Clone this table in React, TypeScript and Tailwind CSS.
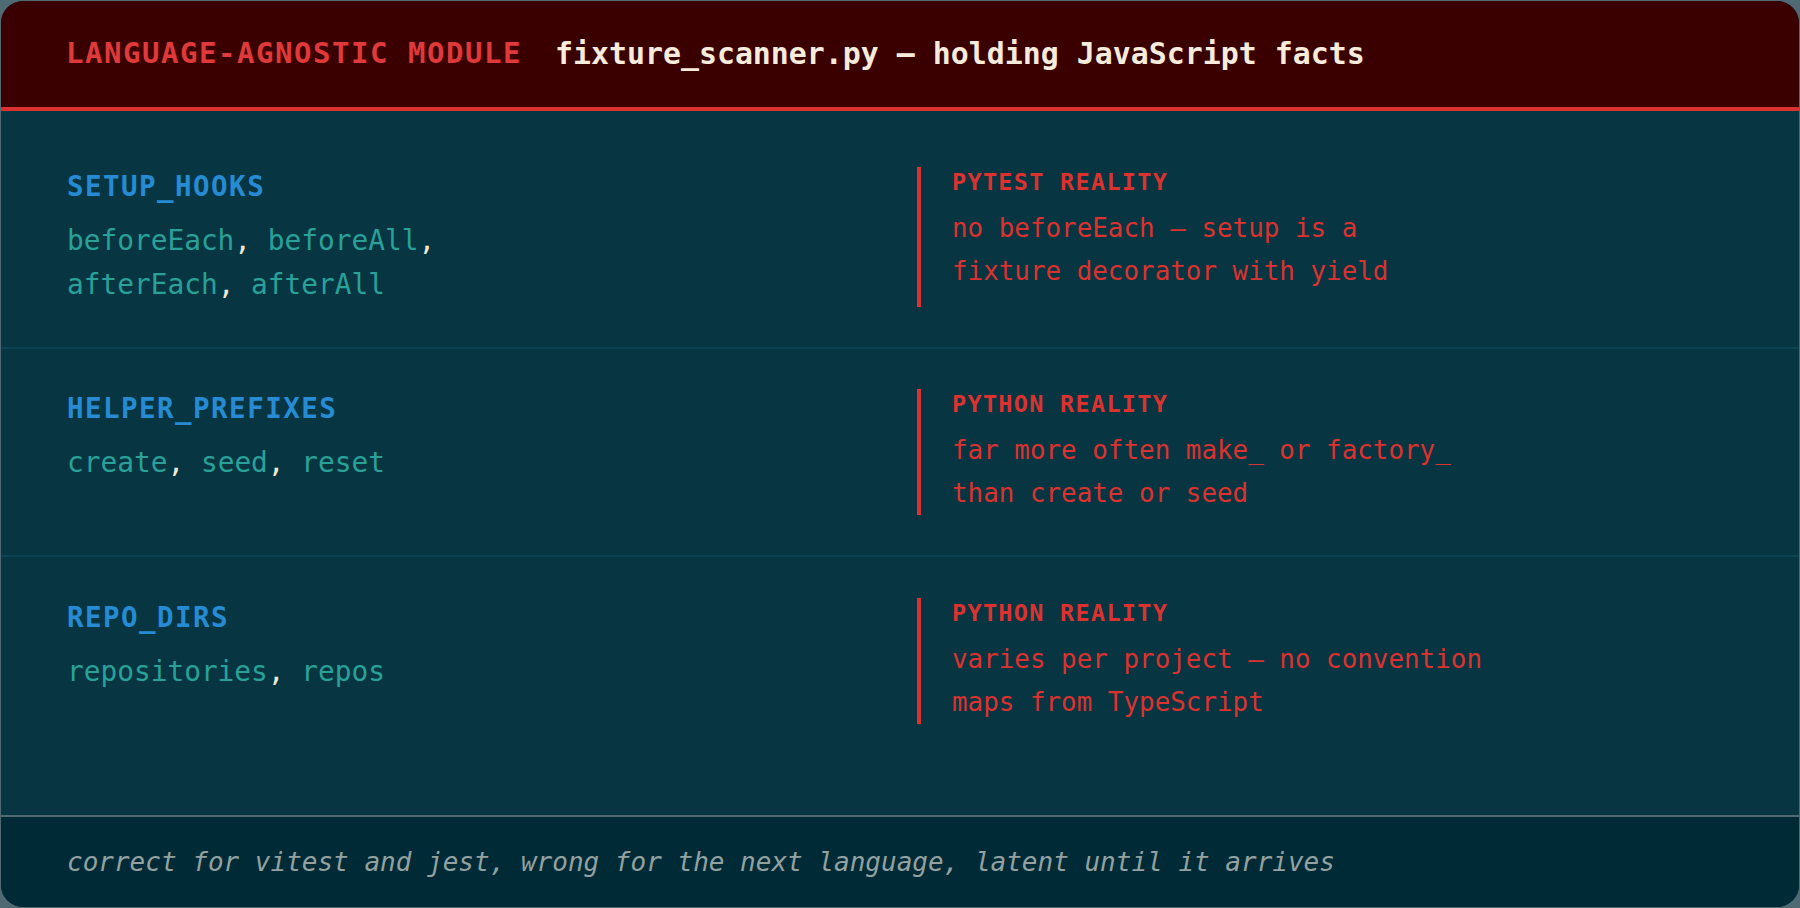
const rows = [
  {
    key: "SETUP_HOOKS",
    values: [["beforeEach", "beforeAll"], ["afterEach", "afterAll"]],
    label: "PYTEST REALITY",
    lines: ["no beforeEach — setup is a", "fixture decorator with yield"],
    first: true,
  },
  {
    key: "HELPER_PREFIXES",
    values: [["create", "seed", "reset"]],
    label: "PYTHON REALITY",
    lines: ["far more often make_ or factory_", "than create or seed"],
  },
  {
    key: "REPO_DIRS",
    values: [["repositories", "repos"]],
    label: "PYTHON REALITY",
    lines: ["varies per project — no convention", "maps from TypeScript"],
    last: true,
  },
];

const mono = "font-['DejaVu_Sans_Mono','Liberation_Mono',monospace]";

export default function App() {
  return (
    <div className={`h-[908px] w-[1800px] bg-[#4f6a72] p-px ${mono}`}>
      <div className="flex h-full flex-col overflow-hidden rounded-[22px] bg-[#073642]">
        {/* Header */}
        <div className="flex h-[110px] shrink-0 items-center gap-[33px] border-b-4 border-[#dc322f] bg-[#3a0000] px-[65px]">
          <span className="text-[29px] font-bold tracking-[0.053em] text-[#e0393a]">
            LANGUAGE-AGNOSTIC MODULE
          </span>
          <span className="text-[29.9px] font-bold text-[#f7ecdc]">
            fixture_scanner.py — holding JavaScript facts
          </span>
        </div>

        {/* Rows */}
        <div className="flex flex-1 flex-col pt-4">
          {rows.map((r) => (
            <div
              key={r.key}
              className={`grid grid-cols-2 gap-x-[34px] px-[66px] ${
                r.last ? "flex-1 pt-[41px]" : "border-b-2 border-[#0b4252] py-[40px]"
              }`}
            >
              <div>
                <div className="text-[27.5px] leading-[38px] font-bold tracking-[0.053em] text-[#268bd2]">
                  {r.key}
                </div>
                <div className="mt-[14px] text-[27.8px] leading-[44px]">
                  {r.values.map((line, i) => (
                    <div key={i}>
                      {line.map((v, j) => (
                        <span key={v}>
                          <span className="text-[#2aa198]">{v}</span>
                          {(j < line.length - 1 || i < r.values.length - 1) && (
                            <span className="text-[#eee8d5]">, </span>
                          )}
                        </span>
                      ))}
                    </div>
                  ))}
                </div>
              </div>
              <div className={`self-start border-l-4 border-[#dc322f] pl-[31px] ${r.first ? "self-stretch" : ""}`}>
                <div className="text-[23.5px] leading-[30px] font-bold tracking-[0.055em] text-[#dc322f]">
                  {r.label}
                </div>
                <div className="mt-[10px] text-[25.9px] leading-[43px] text-[#dc322f]">
                  {r.lines.map((l) => (
                    <div key={l}>{l}</div>
                  ))}
                </div>
              </div>
            </div>
          ))}
        </div>

        {/* Footer */}
        <div className="flex h-[92px] shrink-0 items-center border-t-2 border-[#4f6a72] bg-[#002b36] px-[66px]">
          <span className="text-[26px] italic text-[#93a1a1]">
            correct for vitest and jest, wrong for the next language, latent until it arrives
          </span>
        </div>
      </div>
    </div>
  );
}
